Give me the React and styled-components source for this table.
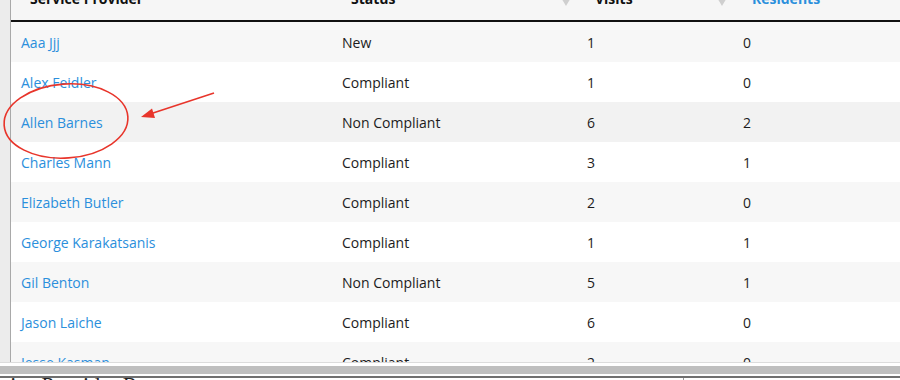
import React from 'react'
import styled, { createGlobalStyle } from 'styled-components'

const GlobalStyle = createGlobalStyle`
  html, body {
    margin: 0;
    padding: 0;
    background: #fff;
    overflow: hidden;
  }
  body {
    font-family: "Open Sans", "Noto Sans", sans-serif;
    font-size: 14px;
    color: #1c1c1c;
  }
`

const Page = styled.div`
  position: relative;
  width: 900px;
  height: 380px;
  display: flex;
  flex-direction: column;
  overflow: hidden;
`

const Viewport = styled.div`
  height: 362px;
  flex-shrink: 0;
  display: flex;
  overflow: hidden;
  border-bottom: 1px solid #dcdcdc;
`

const Gutter = styled.div`
  width: 10px;
  flex-shrink: 0;
  background: #ececec;
  border-right: 1px solid #a9a9a9;
`

const Table = styled.div`
  flex: 1;
  display: flex;
  flex-direction: column;
`

const cols = '321px 245px 156px 1fr'

const HeadRow = styled.div`
  display: grid;
  grid-template-columns: ${cols};
  grid-template-rows: 20px;
  height: 20px;
  flex-shrink: 0;
  background: #f6f6f6;
  border-bottom: 2px solid #111;
  overflow: hidden;
`

const HeadCell = styled.div`
  display: flex;
  align-items: flex-start;
  justify-content: space-between;
  padding: 0 5px 0 ${p => p.$pad || 19}px;
  font-weight: 700;
  color: ${p => (p.$active ? '#2b8fdc' : '#111')};
  line-height: 16px;
`

const HeadLabel = styled.span`
  margin-top: -9px;
`

const SortArrow = styled.span`
  width: 0;
  height: 0;
  margin-top: -4px;
  border-left: 6px solid transparent;
  border-right: 6px solid transparent;
  border-top: 10px solid #cfcfcf;
`

const Row = styled.div`
  display: grid;
  grid-template-columns: ${cols};
  height: 40px;
  flex-shrink: 0;
  align-items: center;
  background: ${p => p.$bg};
`

const Cell = styled.div`
  padding-left: 10px;
  white-space: nowrap;
`

const NameLink = styled.a`
  color: #2b8fdc;
  text-decoration: none;
  cursor: pointer;
`

const ScrollTrack = styled.div`
  height: 13px;
  flex-shrink: 0;
  padding: 3px 0 2px;
  box-sizing: border-box;
  background: #fff;
`

const ScrollThumb = styled.div`
  height: 8px;
  background: #bfbfbf;
`

const Footer = styled.div`
  flex: 1;
  display: flex;
  border-top: 2px solid #6f6f6f;
  background: #fff;
  overflow: hidden;
`

const FooterTitle = styled.div`
  width: 683px;
  font-family: "Liberation Serif", serif;
  font-size: 22px;
  line-height: 24px;
  color: #222;
  margin-top: -5px;
  white-space: nowrap;
  text-indent: -30px;
  overflow: hidden;
`

const FooterSide = styled.div`
  flex: 1;
  border-left: 1px solid #9a9a9a;
`

const Markup = styled.svg`
  position: absolute;
  left: 0;
  top: 0;
  pointer-events: none;
`

const rows = [
  { name: 'Aaa Jjj', status: 'New', visits: 1, residents: 0 },
  { name: 'Alex Feidler', status: 'Compliant', visits: 1, residents: 0 },
  { name: 'Allen Barnes', status: 'Non Compliant', visits: 6, residents: 2, hover: true },
  { name: 'Charles Mann', status: 'Compliant', visits: 3, residents: 1 },
  { name: 'Elizabeth Butler', status: 'Compliant', visits: 2, residents: 0 },
  { name: 'George Karakatsanis', status: 'Compliant', visits: 1, residents: 1 },
  { name: 'Gil Benton', status: 'Non Compliant', visits: 5, residents: 1 },
  { name: 'Jason Laiche', status: 'Compliant', visits: 6, residents: 0 },
  { name: 'Jesse Kasman', status: 'Compliant', visits: 2, residents: 0 },
]

const rowBg = (r, i) => {
  if (r.hover) return '#f2f2f2'
  return i % 2 === 0 ? '#f7f7f7' : '#fff'
}

const App = () => (
  <Page>
    <GlobalStyle />
    <Viewport>
      <Gutter />
      <Table>
        <HeadRow>
          <HeadCell><HeadLabel>Service Provider</HeadLabel></HeadCell>
          <HeadCell><HeadLabel>Status</HeadLabel><SortArrow /></HeadCell>
          <HeadCell $pad={18}><HeadLabel>Visits</HeadLabel><SortArrow /></HeadCell>
          <HeadCell $active><HeadLabel>Residents</HeadLabel></HeadCell>
        </HeadRow>
        {rows.map((r, i) => (
          <Row key={r.name} $bg={rowBg(r, i)}>
            <Cell><NameLink>{r.name}</NameLink></Cell>
            <Cell>{r.status}</Cell>
            <Cell>{r.visits}</Cell>
            <Cell>{r.residents}</Cell>
          </Row>
        ))}
      </Table>
    </Viewport>
    <ScrollTrack><ScrollThumb /></ScrollTrack>
    <Footer>
      <FooterTitle>Service Provider Report</FooterTitle>
      <FooterSide />
    </Footer>
    <Markup width="900" height="380">
      <ellipse cx="66" cy="121" rx="62" ry="37" fill="none" stroke="#e8352b" strokeWidth="1.6" transform="rotate(-4 66 121)" />
      <line x1="214" y1="93" x2="150" y2="114" stroke="#e8352b" strokeWidth="1.6" />
      <polygon points="141,117 152,108.5 155,118" fill="#e8352b" />
    </Markup>
  </Page>
)

export default App
